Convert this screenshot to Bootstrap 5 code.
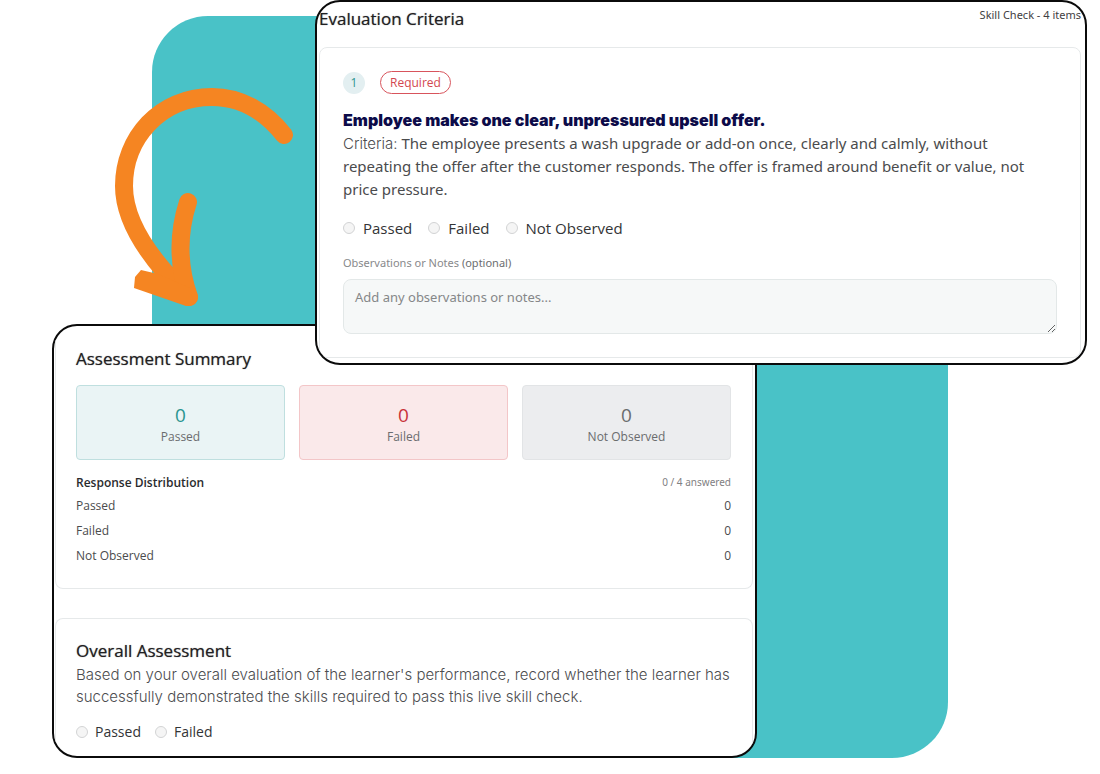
<!DOCTYPE html>
<html lang="en">
<head>
<meta charset="utf-8">
<meta name="viewport" content="width=device-width, initial-scale=1">
<title>Live Skill Check</title>
<link href="https://cdn.jsdelivr.net/npm/bootstrap@5.3.0/dist/css/bootstrap.min.css" rel="stylesheet">
<style>
  body { font-family: "Open Sans", "Noto Sans", sans-serif; font-size: 12px; line-height: 20px; color: #4a4b4d; background: #fff; }

  /* Overlapping panels share the lines of one fluid grid */
  .stage {
    display: grid;
    grid-template-columns: minmax(0, 52fr) minmax(0, 63fr) minmax(0, 37fr) minmax(0, 163fr) minmax(0, 442fr) minmax(0, 191fr) minmax(0, 139fr) minmax(0, 13fr);
    grid-template-rows: 16px auto 41px auto;
    padding-bottom: 16px;
  }
  .backdrop { grid-area: 2 / 4 / 5 / 7; background: #49c2c7; border-radius: 56px 0 56px 0; }
  .arrow { grid-area: 2 / 3 / 3 / 5; margin-top: 72px; z-index: 1; }
  .panel { background: #fff; border: 2px solid #0b0b0b; border-radius: 25px; overflow: hidden; }
  .panel-summary { grid-area: 3 / 2 / 5 / 6; padding: 0 2px 0 1px; }
  .panel-criteria { grid-area: 1 / 5 / 4 / 8; z-index: 2; padding: 5px 4px 5px 2px; }

  .title { font-size: 17px; line-height: 24px; font-weight: 400; color: #1f2022; margin: 0; text-shadow: 0 0 1px #1f202299; }
  .box { border: 1px solid #e6e9ea; border-radius: 8px; padding: 20px 21px 20px 20px; }
  .box-top-open { border-top: 0; border-radius: 0 0 8px 8px; padding-top: 21px; margin-bottom: 29px; }
  .box-bottom-open { border-bottom: 0; border-radius: 8px 8px 0 0; padding-bottom: 14px; }
  .box-item { margin-top: 16px; padding: 23px; }

  .noto { font-family: "Noto Sans", sans-serif; }
  .skill { font-size: 11px; line-height: 16px; color: #3f4042; }
  .count { width: 22px; height: 22px; background: #e3eff1; color: #2b9490; font-size: 12px; }
  .tags { gap: 15px; margin-bottom: 14px; }
  .pill { padding: 0 9px; border: 1px solid #d8545c; border-radius: 12px; color: #d3474f; font-size: 12px; line-height: 21px; }
  .question { font-family: Inter, sans-serif; font-weight: 900; font-size: 16px; line-height: 24px; color: #0c0b49; margin: 0; }
  .criteria { font-size: 15px; line-height: 23px; margin: 0 0 17px; padding-right: 24px; }
  .geometric { font-family: Inter, sans-serif; font-weight: 300; color: #4c4d4f; }
  .overall { font-size: 15px; line-height: 22px; margin: 1px 0 14px; }

  .choices { gap: 16px; }
  .choice { gap: 8px; color: #333436; font-size: 15px; line-height: 20px; }
  .choices-sm { gap: 14px; }
  .choices-sm .choice { gap: 7px; font-size: 14px; }
  .choice .form-check-input { margin: 0; width: 12px; height: 12px; background-color: #f5f5f5; border: 1px solid #d2d3d4; }
  .notes-label { font-size: 11px; line-height: 16px; color: #88898b; margin: 17px 0 8px; }
  .notes-label span { color: #6c6d6f; }
  .notes { display: block; height: 55px; min-height: 55px; padding: 7px 11px; font-size: 13px; line-height: 20px; background: #f6f8f8; border: 1px solid #e3e8e8; border-radius: 8px; }
  .notes::placeholder { color: #858788; }

  .tiles { display: grid; grid-template-columns: repeat(3, minmax(0, 1fr)); gap: 14px; margin: 14px 0 13px; }
  .tile { height: 75px; padding-top: 4px; border: 1px solid; border-radius: 4px; text-align: center; color: #6a6c6e; }
  .tile strong { font-size: 19px; line-height: 24px; font-weight: 500; }
  .tile-pass { background: #eaf4f5; border-color: #bfdfdf; }
  .tile-pass strong { color: #2b9490; }
  .tile-fail { background: #fae9ea; border-color: #f3c6c8; }
  .tile-fail strong { color: #c8323a; }
  .tile-none { background: #ecedef; border-color: #e2e4e6; }
  .subtitle { font-size: 12px; line-height: 20px; font-weight: 600; color: #2a2b2d; margin: 0; }
  .answered { font-size: 10px; color: #7f8082; line-height: 18px; }
  .dist td, .dist th { padding: 0; height: 25px; font-weight: 400; }
</style>
</head>
<body>
<main class="stage">
  <div class="backdrop"></div>

  <svg class="arrow w-100" viewBox="115 88 200 222" aria-hidden="true">
    <g fill="none" stroke="#f58522" stroke-width="18" stroke-linecap="round">
      <path d="M284 135C265 111 240 97 212 97C160 97 124 138 124 186C124 220 146 256 189 297"/>
      <path d="M188 202C178 233 177 263 189 297"/>
    </g>
    <path fill="#f58522" d="M141 270L158 274L190 288L194 304L186 306L134 288L135 277Z"/>
  </svg>

  <section class="panel panel-summary">
    <div class="box box-top-open">
      <h2 class="title">Assessment Summary</h2>
      <div class="tiles">
        <div class="tile tile-pass d-flex flex-column justify-content-center"><strong>0</strong><span>Passed</span></div>
        <div class="tile tile-fail d-flex flex-column justify-content-center"><strong>0</strong><span>Failed</span></div>
        <div class="tile tile-none d-flex flex-column justify-content-center"><strong>0</strong><span>Not Observed</span></div>
      </div>
      <div class="d-flex justify-content-between">
        <h3 class="subtitle">Response Distribution</h3>
        <span class="answered noto">0 / 4 answered</span>
      </div>
      <table class="dist w-100">
        <tbody>
          <tr><th scope="row">Passed</th><td class="text-end">0</td></tr>
          <tr><th scope="row">Failed</th><td class="text-end">0</td></tr>
          <tr><th scope="row">Not Observed</th><td class="text-end">0</td></tr>
        </tbody>
      </table>
    </div>
    <div class="box box-bottom-open">
      <h2 class="title">Overall Assessment</h2>
      <p class="overall geometric">Based on your overall evaluation of the learner's performance, record whether the learner has successfully demonstrated the skills required to pass this live skill check.</p>
      <div class="choices choices-sm d-flex flex-wrap">
        <label class="choice d-flex align-items-center"><input class="form-check-input" type="radio" name="overall">Passed</label>
        <label class="choice d-flex align-items-center"><input class="form-check-input" type="radio" name="overall">Failed</label>
      </div>
    </div>
  </section>

  <section class="panel panel-criteria">
    <header class="d-flex justify-content-between">
      <h2 class="title">Evaluation Criteria</h2>
      <span class="skill noto">Skill Check - 4 items</span>
    </header>
    <div class="box box-item">
      <div class="tags d-flex align-items-center">
        <span class="count rounded-circle d-flex align-items-center justify-content-center">1</span>
        <span class="pill">Required</span>
      </div>
      <h3 class="question">Employee makes one clear, unpressured upsell offer.</h3>
      <p class="criteria noto"><span class="geometric">Criteria:</span> The employee presents a wash upgrade or add-on once, clearly and calmly, without repeating the offer after the customer responds. The offer is framed around benefit or value, not price pressure.</p>
      <div class="choices d-flex flex-wrap">
        <label class="choice d-flex align-items-center"><input class="form-check-input" type="radio" name="item1">Passed</label>
        <label class="choice d-flex align-items-center"><input class="form-check-input" type="radio" name="item1">Failed</label>
        <label class="choice d-flex align-items-center"><input class="form-check-input" type="radio" name="item1">Not Observed</label>
      </div>
      <label class="notes-label noto d-block" for="notes">Observations or Notes <span>(optional)</span></label>
      <textarea class="notes noto form-control" id="notes" placeholder="Add any observations or notes..."></textarea>
    </div>
  </section>
</main>
<script src="https://cdn.jsdelivr.net/npm/bootstrap@5.3.0/dist/js/bootstrap.bundle.min.js"></script>
</body>
</html>
